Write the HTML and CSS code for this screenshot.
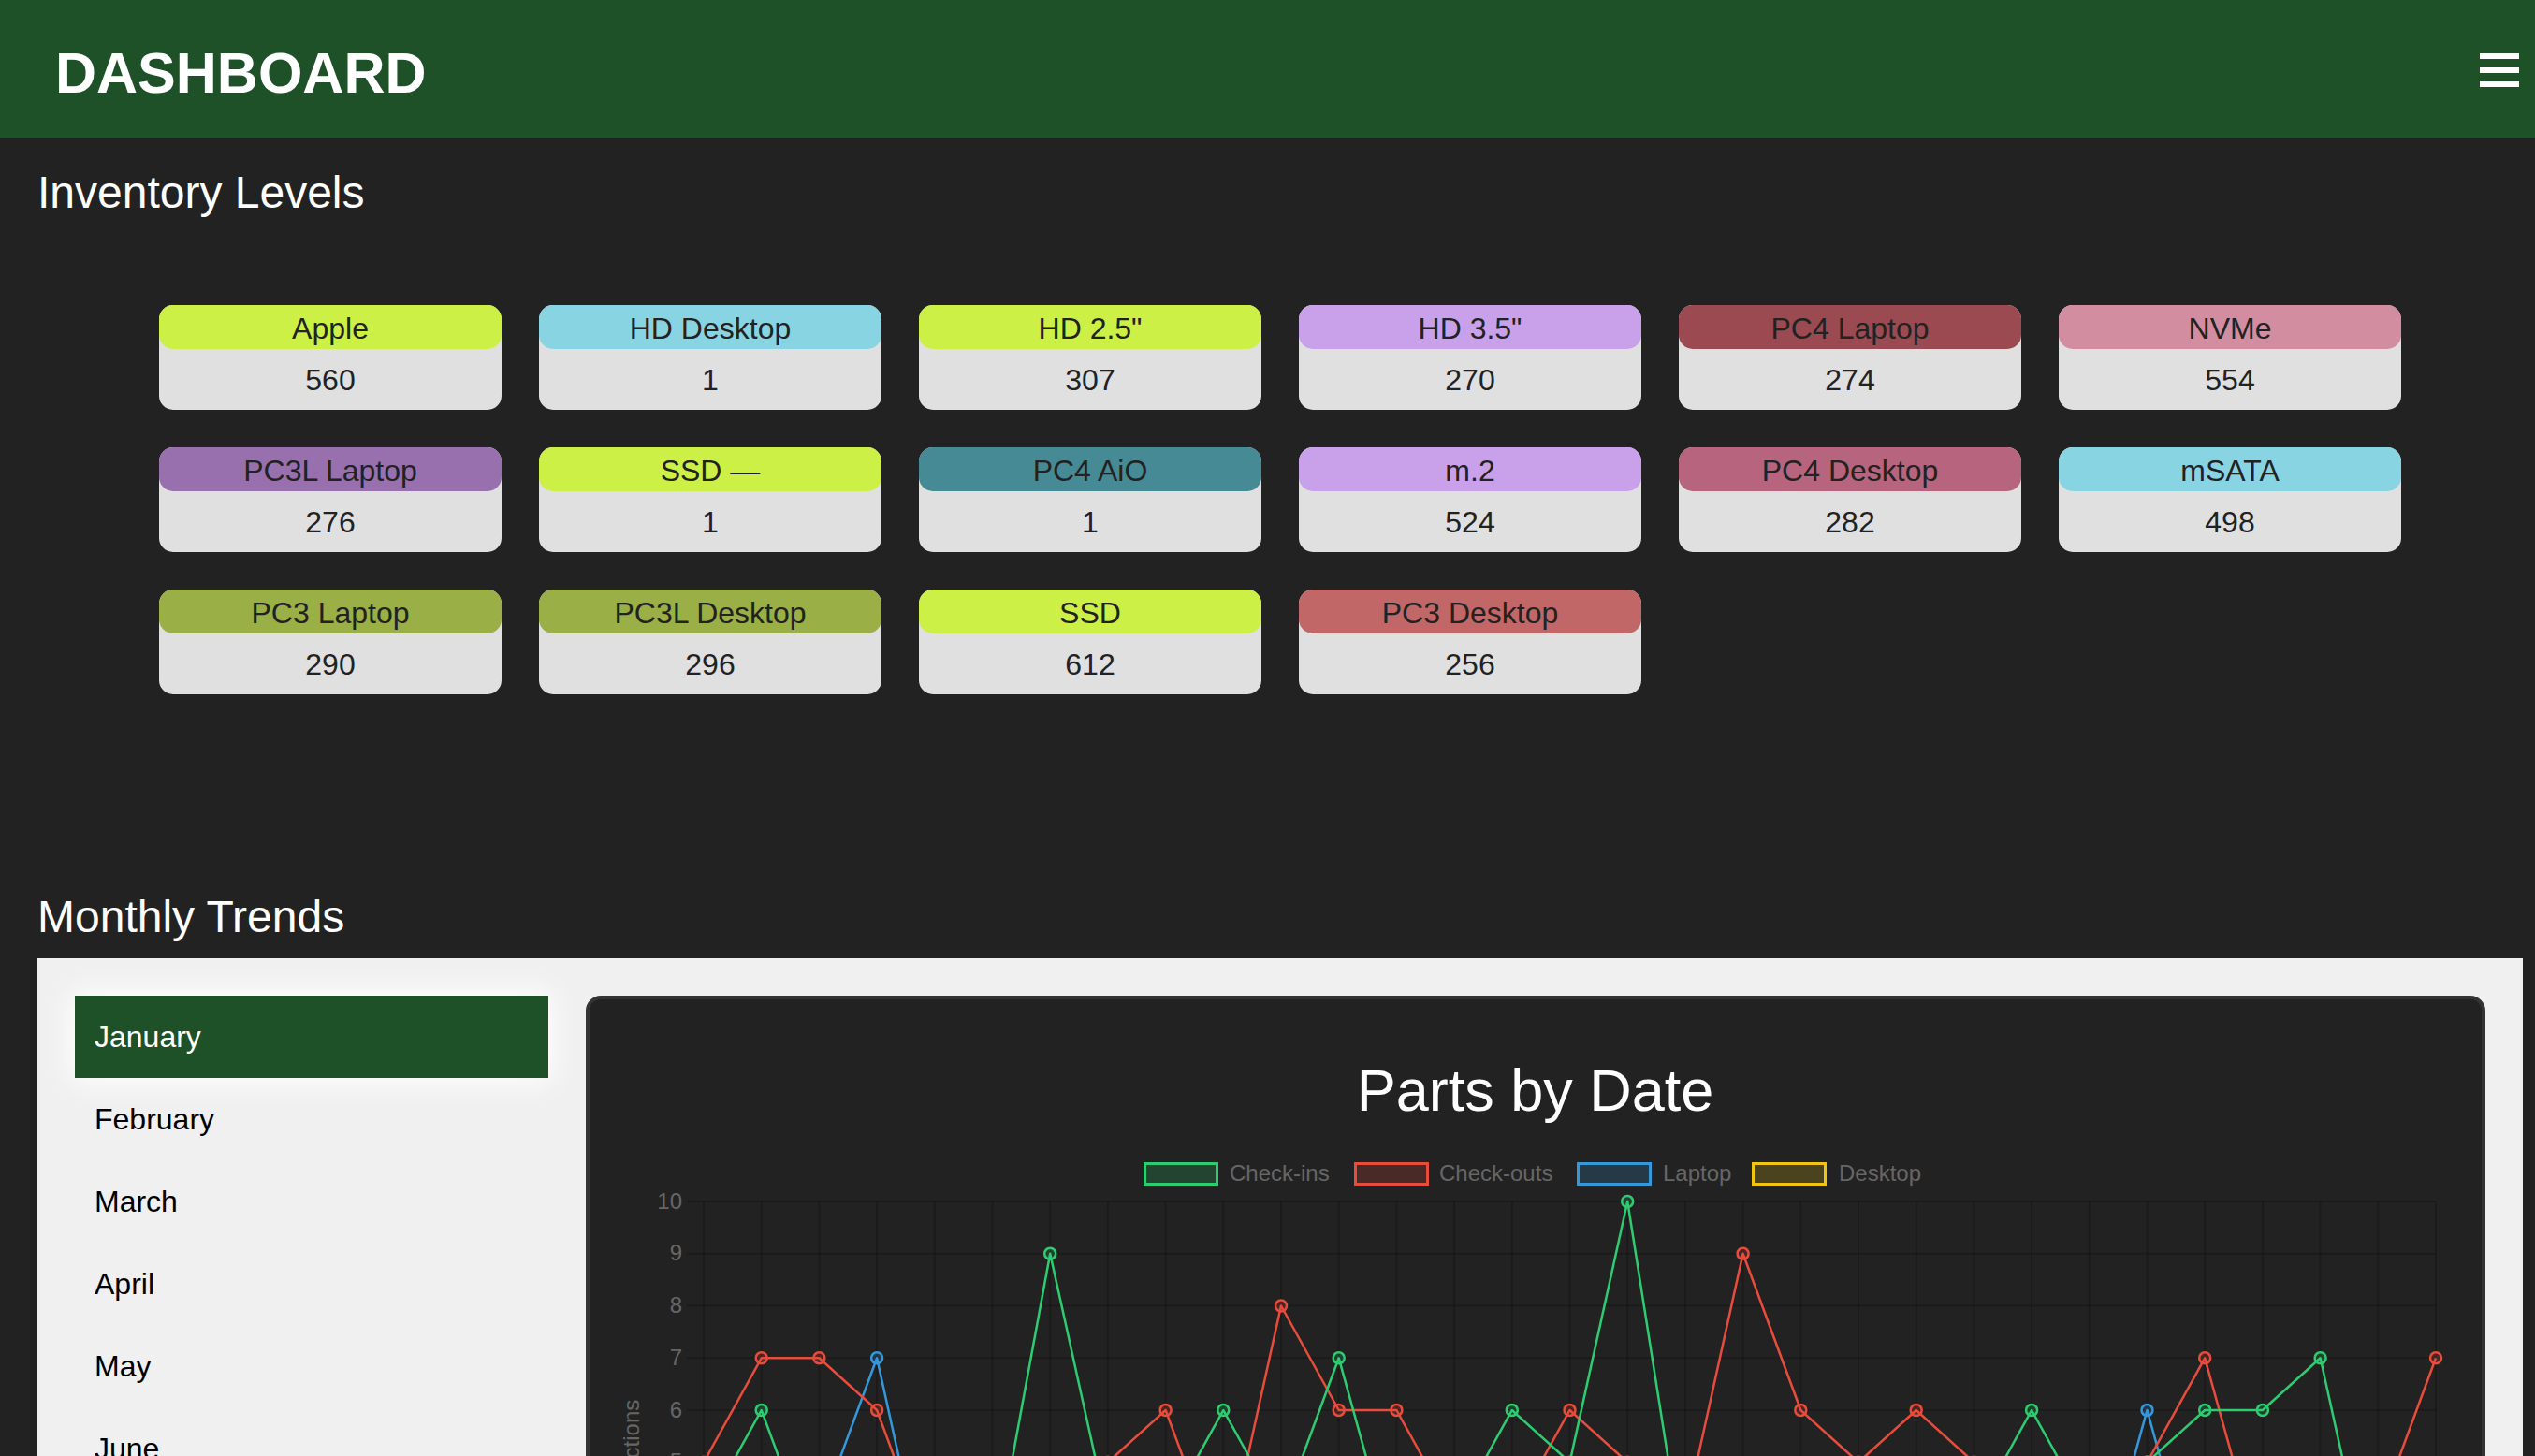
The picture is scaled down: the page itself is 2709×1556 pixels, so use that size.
FILE: index.html
```html
<!DOCTYPE html>
<html lang="en">
<head>
<meta charset="utf-8">
<title>Dashboard</title>
<link rel="stylesheet" href="styles.css">
</head>
<body>
<header class="topbar">
  <h1 class="brand">DASHBOARD</h1>
  <button class="menu-btn" aria-label="Menu"><span></span><span></span><span></span></button>
</header>

<section class="section">
  <h2 class="section-title">Inventory Levels</h2>
  <div class="inventory-grid">
    <div class="part-card"><div class="part-name c-lime">Apple</div><div class="part-count">560</div></div>
    <div class="part-card"><div class="part-name c-cyan">HD Desktop</div><div class="part-count">1</div></div>
    <div class="part-card"><div class="part-name c-lime">HD 2.5"</div><div class="part-count">307</div></div>
    <div class="part-card"><div class="part-name c-lavender">HD 3.5"</div><div class="part-count">270</div></div>
    <div class="part-card"><div class="part-name c-brick">PC4 Laptop</div><div class="part-count">274</div></div>
    <div class="part-card"><div class="part-name c-pink">NVMe</div><div class="part-count">554</div></div>
    <div class="part-card"><div class="part-name c-purple">PC3L Laptop</div><div class="part-count">276</div></div>
    <div class="part-card"><div class="part-name c-lime">SSD —</div><div class="part-count">1</div></div>
    <div class="part-card"><div class="part-name c-teal">PC4 AiO</div><div class="part-count">1</div></div>
    <div class="part-card"><div class="part-name c-lavender">m.2</div><div class="part-count">524</div></div>
    <div class="part-card"><div class="part-name c-rose">PC4 Desktop</div><div class="part-count">282</div></div>
    <div class="part-card"><div class="part-name c-cyan">mSATA</div><div class="part-count">498</div></div>
    <div class="part-card"><div class="part-name c-olive">PC3 Laptop</div><div class="part-count">290</div></div>
    <div class="part-card"><div class="part-name c-olive">PC3L Desktop</div><div class="part-count">296</div></div>
    <div class="part-card"><div class="part-name c-lime">SSD</div><div class="part-count">612</div></div>
    <div class="part-card"><div class="part-name c-coral">PC3 Desktop</div><div class="part-count">256</div></div>
  </div>
</section>

<section class="section">
  <h2 class="section-title trends-title">Monthly Trends</h2>
  <div class="trends-panel">
    <ul class="month-list">
      <li class="month active">January</li>
      <li class="month">February</li>
      <li class="month">March</li>
      <li class="month">April</li>
      <li class="month">May</li>
      <li class="month">June</li>
      <li class="month">July</li>
      <li class="month">August</li>
      <li class="month">September</li>
      <li class="month">October</li>
      <li class="month">November</li>
      <li class="month">December</li>
    </ul>
    <div class="chart-card">
      <svg id="chart" class="chart-svg" viewBox="0 0 2021 880" preserveAspectRatio="xMinYMin meet" xmlns="http://www.w3.org/2000/svg">
        <text class="chart-title" x="1010.5" y="119" text-anchor="middle">Parts by Date</text>
        <g class="legend">
          <rect x="593.5" y="175.5" width="77" height="22" fill="rgba(46,204,113,0.2)" stroke="#2ecc71" stroke-width="3"/>
          <text x="684" y="194">Check-ins</text>
          <rect x="818.5" y="175.5" width="77" height="22" fill="rgba(231,76,60,0.2)" stroke="#e74c3c" stroke-width="3"/>
          <text x="908" y="194">Check-outs</text>
          <rect x="1056.5" y="175.5" width="77" height="22" fill="rgba(52,152,219,0.2)" stroke="#3498db" stroke-width="3"/>
          <text x="1147" y="194">Laptop</text>
          <rect x="1243.5" y="175.5" width="77" height="22" fill="rgba(241,196,15,0.2)" stroke="#f1c40f" stroke-width="3"/>
          <text x="1335" y="194">Desktop</text>
        </g>
        <g id="grid"></g>
        <text class="axis-title" transform="translate(53 496) rotate(-90)" text-anchor="middle">Transactions</text>
        <g id="series"></g>
      </svg>
    </div>
  </div>
</section>
<script src="script.js"></script>
</body>
</html>
```

FILE: styles.css
```css
* { box-sizing: border-box; }
html, body { margin: 0; padding: 0; }
body {
  background: #222222;
  color: #ffffff;
  font-family: "Liberation Sans", Arial, Helvetica, sans-serif;
}

.topbar {
  background: #1e5128;
  height: 148px;
  display: flex;
  justify-content: space-between;
  align-items: flex-start;
  padding: 48px 17px 0 59px;
}
.brand {
  margin: 0;
  font-size: 61px;
  line-height: 60px;
  font-weight: bold;
  color: #ffffff;
}
.menu-btn {
  margin-top: 9px;
  padding: 0;
  border: 0;
  background: transparent;
  display: flex;
  flex-direction: column;
  gap: 9px;
  width: 42px;
  cursor: pointer;
}
.menu-btn span {
  display: block;
  height: 6px;
  width: 42px;
  background: #ffffff;
}

.section { padding: 0 40px; }
.section-title {
  margin: 30px 0 0;
  font-size: 48px;
  line-height: 56px;
  font-weight: normal;
  color: #ffffff;
}
.trends-title { margin-top: 210px; }

.inventory-grid {
  display: grid;
  grid-template-columns: repeat(6, 366px);
  gap: 40px;
  margin: 92px 0 0 130px;
}
.part-card {
  background: #e0e0e0;
  border-radius: 15px;
  height: 112px;
  color: #222222;
  text-align: center;
  font-size: 32px;
}
.part-name {
  height: 47px;
  line-height: 50px;
  border-radius: 15px;
}
.part-count { line-height: 67px; }

.c-lime { background: #ccf045; }
.c-cyan { background: #89d4e2; }
.c-lavender { background: #c9a1eb; }
.c-brick { background: #9a4a50; }
.c-pink { background: #d38da0; }
.c-purple { background: #9870ae; }
.c-teal { background: #458a95; }
.c-rose { background: #b7647e; }
.c-olive { background: #9aaf45; }
.c-coral { background: #c26767; }

.trends-panel {
  background: #f0f0f0;
  margin: 16px -27px 0 0;
  padding: 40px;
  display: flex;
  gap: 40px;
  align-items: flex-start;
}
.month-list {
  flex: 1 1 0;
  min-width: 0;
  list-style: none;
  margin: 0;
  padding: 0;
}
.month {
  height: 88px;
  line-height: 88px;
  padding-left: 21px;
  font-size: 32px;
  color: #000000;
}
.month.active {
  background: #1e5128;
  color: #ffffff;
  box-shadow: 0 0 30px 4px #ffffff;
}
.chart-card {
  flex: 4 1 0;
  min-width: 0;
  background: #222222;
  border: 4px solid #333333;
  border-radius: 16px;
  overflow: hidden;
}
.chart-svg {
  display: block;
  width: 100%;
  height: 880px;
  font-family: "Liberation Sans", Arial, Helvetica, sans-serif;
}
.chart-title { fill: #ffffff; font-size: 63px; }
.legend text { fill: #666666; font-size: 24px; }
.axis-title { fill: #666666; font-size: 24px; }
.tick-label { fill: #666666; font-size: 24px; }
.grid-line { stroke: rgba(0, 0, 0, 0.2); stroke-width: 2; }
.series-line { fill: none; stroke-width: 2.5; stroke-linejoin: round; }
.series-point { stroke-width: 2.5; }
```

FILE: script.js
```js
(function () {
  var NS = "http://www.w3.org/2000/svg";
  var X0 = 122, DX = 61.7, Y10 = 216, DY = 55.75;
  function xAt(i) { return X0 + i * DX; }
  function yAt(v) { return Y10 + (10 - v) * DY; }
  function el(name, attrs, text) {
    var e = document.createElementNS(NS, name);
    for (var k in attrs) { e.setAttribute(k, attrs[k]); }
    if (text !== undefined) { e.textContent = text; }
    return e;
  }
  var grid = document.getElementById("grid");
  var series = document.getElementById("series");
  var i, v;
  for (v = 0; v <= 10; v++) {
    var y = yAt(v);
    grid.appendChild(el("line", { "class": "grid-line", x1: 104, y1: y, x2: xAt(30), y2: y }));
    grid.appendChild(el("text", { "class": "tick-label", x: 99, y: y + 7.5, "text-anchor": "end" }, String(v)));
  }
  for (i = 0; i <= 30; i++) {
    var x = xAt(i);
    grid.appendChild(el("line", { "class": "grid-line", x1: x, y1: yAt(10), x2: x, y2: yAt(0) + 20 }));
    grid.appendChild(el("text", { "class": "tick-label", x: x, y: yAt(0) + 48, "text-anchor": "middle" }, String(i + 1)));
  }
  var datasets = [
    { color: "#f1c40f", fill: "rgba(241,196,15,0.2)", data: [0,1,2,0,1,3,2,0,1,2,1,0,3,2,1,0,2,1,3,0,1,2,1,0,2,3,1,2,0,1,2] },
    { color: "#3498db", fill: "rgba(52,152,219,0.2)", data: [1,2,4,7,2,1,0,1,2,1,0,2,1,3,1,0,2,1,0,1,2,0,1,2,2,6,2,1,0,1,0] },
    { color: "#e74c3c", fill: "rgba(231,76,60,0.2)", data: [5,7,7,6,3,2,4,5,6,3,8,6,6,4,4,6,5,4,9,6,5,6,5,3,2,5,7,3,2,4,7] },
    { color: "#2ecc71", fill: "rgba(46,204,113,0.2)", data: [4,6,3,2,1,3,9,4,4,6,4,7,3,4,6,5,10,3,2,1,3,2,4,6,4,5,6,6,7,2,2] }
  ];
  datasets.forEach(function (ds) {
    var pts = ds.data.map(function (val, idx) { return xAt(idx).toFixed(1) + "," + yAt(val).toFixed(1); }).join(" ");
    series.appendChild(el("polyline", { "class": "series-line", points: pts, stroke: ds.color }));
    ds.data.forEach(function (val, idx) {
      series.appendChild(el("circle", { "class": "series-point", cx: xAt(idx), cy: yAt(val), r: 6, stroke: ds.color, fill: ds.fill }));
    });
  });
})();
```
